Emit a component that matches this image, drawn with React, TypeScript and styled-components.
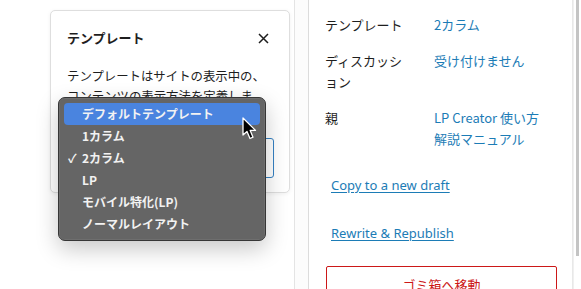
import React from "react";
import styled, { createGlobalStyle } from "styled-components";

const Global = createGlobalStyle`
  html, body { margin: 0; padding: 0; background: #fff; }
  body { width: 581px; height: 289px; overflow: hidden; font-family: "Noto Sans CJK JP", "Noto Sans", sans-serif; color: #1e1e1e; }
`;

const Page = styled.div`
  display: flex;
  width: 581px;
  height: 289px;
  overflow: hidden;
`;

const LeftArea = styled.div`
  position: relative;
  width: 295px;
  flex: none;
  border-right: 1px solid #e4e4e4;
  padding: 10px 0 0 50px;
  box-sizing: border-box;
`;

const Gutter = styled.div`
  width: 13px;
  flex: none;
  background: #fcfcfc;
`;

const Card = styled.div`
  position: relative;
  width: 240px;
  height: 183px;
  box-sizing: border-box;
  border: 1px solid #dedede;
  border-radius: 5px;
  background: #fff;
  box-shadow: 0 1px 4px rgba(0, 0, 0, 0.06);
  padding: 16px 16px 0 16px;
  overflow: hidden;
`;

const CardHeader = styled.div`
  display: flex;
  align-items: center;
  justify-content: space-between;
  height: 22px;
  margin-bottom: 18px;
`;

const CardTitle = styled.div`
  font-size: 13px;
  font-weight: 700;
  line-height: 22px;
  color: #1e1e1e;
`;

const CloseButton = styled.div`
  width: 14px;
  height: 14px;
  display: flex;
  align-items: center;
  justify-content: center;
  margin-right: 3px;
`;

const Description = styled.div`
  font-size: 12.4px;
  line-height: 19.5px;
  width: 204px;
  color: #1e1e1e;
  height: 78px;
  overflow: hidden;
`;

const SelectBox = styled.div`
  position: absolute;
  left: 16px;
  top: 127px;
  width: 207px;
  height: 40px;
  box-sizing: border-box;
  border: 1.5px solid #3582c4;
  border-radius: 3px;
`;

const Menu = styled.div`
  position: absolute;
  left: 58px;
  top: 97px;
  width: 208px;
  box-sizing: border-box;
  padding: 5px;
  background: #656565;
  border: 1px solid #363636;
  border-radius: 7px;
  box-shadow: 0 8px 22px rgba(0, 0, 0, 0.22), inset 0 0 0 0.5px rgba(255,255,255,0.12);
  display: flex;
  flex-direction: column;
`;

const MenuItem = styled.div<{ $active?: boolean }>`
  position: relative;
  height: 22px;
  line-height: 22px;
  padding-left: 18px;
  border-radius: 4px;
  font-size: 12px;
  font-weight: 600;
  color: #f2f2f2;
  background: ${(p) => (p.$active ? "#4a84df" : "transparent")};
`;

const Check = styled.span`
  position: absolute;
  left: 4px;
  top: 0;
  font-size: 12px;
  color: #f2f2f2;
`;

const Cursor = styled.svg`
  position: absolute;
  left: 242px;
  top: 117px;
`;

const Sidebar = styled.div`
  width: 265px;
  flex: none;
  border-left: 1px solid #dcdcdc;
  border-right: 1px solid #e8e8e8;
  box-sizing: border-box;
  padding: 14px 16px 0 16px;
  display: flex;
  flex-direction: column;
`;

const InfoRow = styled.div<{ $last?: boolean }>`
  display: grid;
  grid-template-columns: 84px 115px;
  column-gap: 25px;
  font-size: 13px;
  line-height: 21px;
  margin-bottom: ${(p) => (p.$last ? 26 : 15)}px;
`;

const Label = styled.div`
  color: #1e1e1e;
`;

const Value = styled.div`
  color: #1c7cb6;
`;

const ActionLink = styled.a<{ $gap?: number }>`
  display: block;
  margin-left: 6px;
  margin-top: ${(p) => p.$gap ?? 0}px;
  font-family: "Noto Sans", sans-serif;
  font-size: 13px;
  line-height: 21px;
  color: #1c7cb6;
  text-decoration: underline;
  text-underline-offset: 2px;
`;

const TrashButton = styled.div`
  flex: none;
  margin-top: 22px;
  margin-left: 1px;
  width: 231px;
  height: 36px;
  box-sizing: border-box;
  border: 1px solid #cc1818;
  border-radius: 2px;
  color: #cc1818;
  font-size: 13px;
  line-height: 19px;
  display: flex;
  align-items: center;
  justify-content: center;
`;

const Scrollbar = styled.div`
  width: 6px;
  flex: none;
  display: flex;
  justify-content: flex-end;
  border-left: 1px solid #f0f0f0;
  box-sizing: border-box;
`;

const Thumb = styled.div`
  width: 3px;
  height: 256px;
  background: #c4c4c4;
`;

const items = ["デフォルトテンプレート", "1カラム", "2カラム", "LP", "モバイル特化(LP)", "ノーマルレイアウト"];

export default function App() {
  return (
    <>
      <Global />
      <Page>
        <LeftArea>
          <Card>
            <CardHeader>
              <CardTitle>テンプレート</CardTitle>
              <CloseButton>
                <svg width="11" height="11" viewBox="0 0 11 11">
                  <path d="M1 1L10 10M10 1L1 10" stroke="#1e1e1e" strokeWidth="1.5" />
                </svg>
              </CloseButton>
            </CardHeader>
            <Description>
              テンプレートはサイトの表示中の、コンテンツの表示方法を定義します。
            </Description>
            <SelectBox />
          </Card>
          <Menu>
            {items.map((t, i) => (
              <MenuItem key={t} $active={i === 0}>
                {i === 2 && <Check>✓</Check>}
                {t}
              </MenuItem>
            ))}
          </Menu>
          <Cursor width="16" height="24" viewBox="0 0 16 24">
            <path
              d="M1 1 L1 18 L5 14.5 L8 21.5 L11 20.2 L8.2 13.4 L13.5 13.4 Z"
              fill="#000"
              stroke="#fff"
              strokeWidth="1.3"
              strokeLinejoin="round"
            />
          </Cursor>
        </LeftArea>
        <Gutter />
        <Sidebar>
          <InfoRow>
            <Label>テンプレート</Label>
            <Value>2カラム</Value>
          </InfoRow>
          <InfoRow>
            <Label>ディスカッション</Label>
            <Value>受け付けません</Value>
          </InfoRow>
          <InfoRow $last>
            <Label>親</Label>
            <Value>LP Creator 使い方 解説マニュアル</Value>
          </InfoRow>
          <ActionLink>Copy to a new draft</ActionLink>
          <ActionLink $gap={27}>Rewrite &amp; Republish</ActionLink>
          <TrashButton>ゴミ箱へ移動</TrashButton>
        </Sidebar>
        <Scrollbar>
          <Thumb />
        </Scrollbar>
      </Page>
    </>
  );
}
